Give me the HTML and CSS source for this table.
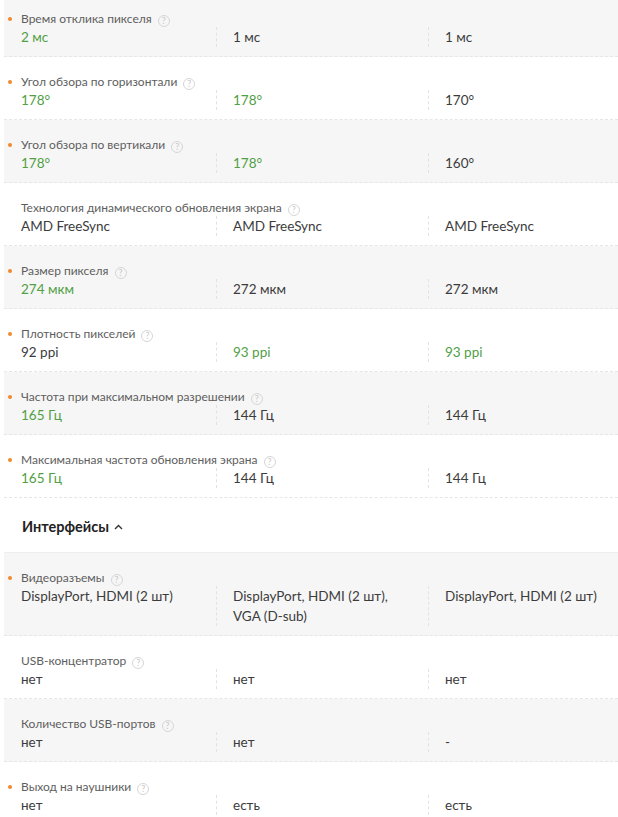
FILE: index.html
```html
<!DOCTYPE html>
<html lang="ru">
<head>
<meta charset="utf-8">
<link rel="stylesheet" href="styles.css">
</head>
<body>
<div class="specs">
  <div class="row gray">
    <div class="label mark">Время отклика пикселя <span class="help">?</span></div>
    <div class="cells"><div class="cell good">2 мс</div><div class="cell">1 мс</div><div class="cell">1 мс</div></div>
  </div>
  <div class="row">
    <div class="label mark">Угол обзора по горизонтали <span class="help">?</span></div>
    <div class="cells"><div class="cell good">178°</div><div class="cell good">178°</div><div class="cell">170°</div></div>
  </div>
  <div class="row gray">
    <div class="label mark">Угол обзора по вертикали <span class="help">?</span></div>
    <div class="cells"><div class="cell good">178°</div><div class="cell good">178°</div><div class="cell">160°</div></div>
  </div>
  <div class="row">
    <div class="label">Технология динамического обновления экрана <span class="help">?</span></div>
    <div class="cells"><div class="cell">AMD FreeSync</div><div class="cell">AMD FreeSync</div><div class="cell">AMD FreeSync</div></div>
  </div>
  <div class="row gray">
    <div class="label mark">Размер пикселя <span class="help">?</span></div>
    <div class="cells"><div class="cell good">274 мкм</div><div class="cell">272 мкм</div><div class="cell">272 мкм</div></div>
  </div>
  <div class="row">
    <div class="label mark">Плотность пикселей <span class="help">?</span></div>
    <div class="cells"><div class="cell">92 ppi</div><div class="cell good">93 ppi</div><div class="cell good">93 ppi</div></div>
  </div>
  <div class="row gray">
    <div class="label mark">Частота при максимальном разрешении <span class="help">?</span></div>
    <div class="cells"><div class="cell good">165 Гц</div><div class="cell">144 Гц</div><div class="cell">144 Гц</div></div>
  </div>
  <div class="row">
    <div class="label mark">Максимальная частота обновления экрана <span class="help">?</span></div>
    <div class="cells"><div class="cell good">165 Гц</div><div class="cell">144 Гц</div><div class="cell">144 Гц</div></div>
  </div>
  <div class="section">
    <span class="section-title">Интерфейсы</span>
    <svg class="chev" width="9" height="6" viewBox="0 0 9 6"><path d="M1 5 L4.5 1.5 L8 5" fill="none" stroke="#333" stroke-width="1.4"/></svg>
  </div>
  <div class="row gray">
    <div class="label mark">Видеоразъемы <span class="help">?</span></div>
    <div class="cells"><div class="cell">DisplayPort, HDMI (2 шт)</div><div class="cell">DisplayPort, HDMI (2 шт), VGA (D-sub)</div><div class="cell">DisplayPort, HDMI (2 шт)</div></div>
  </div>
  <div class="row">
    <div class="label">USB-концентратор <span class="help">?</span></div>
    <div class="cells"><div class="cell">нет</div><div class="cell">нет</div><div class="cell">нет</div></div>
  </div>
  <div class="row gray">
    <div class="label">Количество USB-портов <span class="help">?</span></div>
    <div class="cells"><div class="cell">нет</div><div class="cell">нет</div><div class="cell">-</div></div>
  </div>
  <div class="row">
    <div class="label mark">Выход на наушники <span class="help">?</span></div>
    <div class="cells"><div class="cell">нет</div><div class="cell">есть</div><div class="cell">есть</div></div>
  </div>
</div>
</body>
</html>
```

FILE: styles.css
```css
html, body {
  margin: 0;
  padding: 0;
  background: #fff;
  overflow: hidden;
}
body {
  font-family: "Lato", "Roboto", "Liberation Sans", sans-serif;
  color: #333;
  width: 618px;
  height: 817px;
}
.specs {
  margin-top: -6px;
  padding-left: 4px;
  width: 614px;
  overflow: hidden;
}
.row {
  padding: 16px 0 9px 0;
  border-bottom: 1px dashed #e6e6e6;
  background: #fff;
}
.row.gray {
  background: #f6f6f6;
}
.label {
  position: relative;
  padding-left: 17px;
  font-size: 12px;
  line-height: 17px;
  color: #5e5e5e;
}
.label.mark::before {
  content: "";
  position: absolute;
  left: 4px;
  top: 7px;
  width: 4px;
  height: 4px;
  border-radius: 50%;
  background: #f08a2c;
}
.help {
  display: inline-block;
  box-sizing: border-box;
  width: 12px;
  height: 12px;
  border: 1px solid #d6d6d6;
  border-radius: 50%;
  color: #c8c8c8;
  font-size: 9px;
  line-height: 10px;
  text-align: center;
  vertical-align: -1px;
  margin-left: 3px;
}
.cells {
  display: grid;
  grid-template-columns: 212px 212px 212px;
}
.cell {
  padding: 0 24px 0 17px;
  font-size: 13.5px;
  line-height: 20px;
  color: #3c3c3c;
}
.cell + .cell {
  border-left: 1px dashed #e2e2e2;
  padding-left: 16px;
}
.cell.good {
  color: #50a044;
}
.section {
  height: 55px;
  padding-top: 3px;
  display: flex;
  align-items: center;
  padding-left: 18px;
  gap: 5px;
  background: #fff;
  border-bottom: 1px solid #eeeeee;
  box-sizing: border-box;
}
.section-title {
  font-size: 14.5px;
  font-weight: bold;
  color: #222;
}
```
